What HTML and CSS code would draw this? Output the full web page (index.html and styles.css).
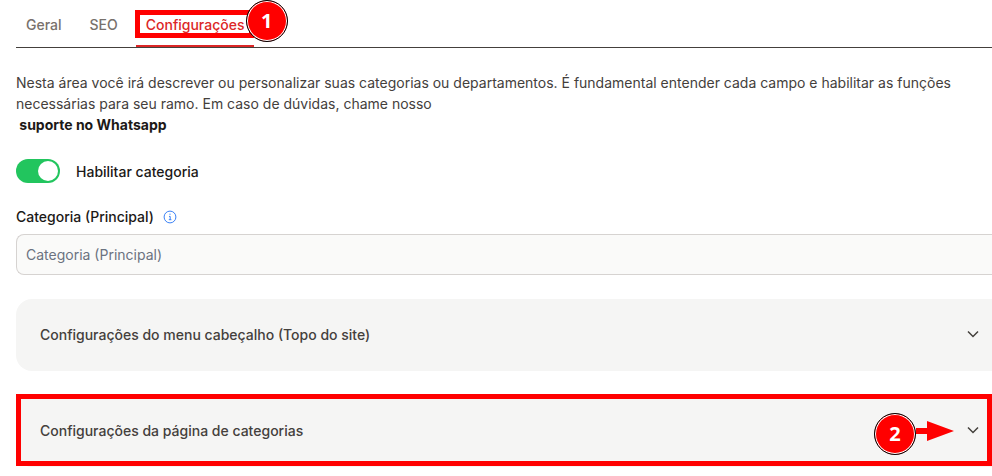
FILE: index.html
```
<!DOCTYPE html>
<html lang="pt-BR">
<head>
    <meta charset="UTF-8">
    <meta name="viewport" content="width=device-width, initial-scale=1.0">
    <title>Configurações da categoria</title>
    <link rel="stylesheet" href="styles.css">
</head>
<body>

<main class="page">
    <nav class="tabs">
        <button type="button" class="tab">Geral</button>
        <button type="button" class="tab">SEO</button>
        <button type="button" class="tab active">
            Configurações
            <span class="marker marker-tab"></span>
            <span class="step step-one">1</span>
        </button>
    </nav>

    <p class="intro">
        Nesta área você irá descrever ou personalizar suas categorias ou departamentos. É fundamental entender cada campo e habilitar as funções necessárias para seu ramo. Em caso de dúvidas, chame nosso
        <a href="#" class="support">&nbsp;suporte no Whatsapp</a>
    </p>

    <label class="switch-row">
        <input type="checkbox" class="switch" checked>
        Habilitar categoria
    </label>

    <div class="field">
        <div class="field-label">
            <label for="categoria">Categoria (Principal)</label>
            <svg class="info" viewBox="0 0 14 14" fill="none" stroke="currentColor">
                <circle cx="7" cy="7" r="5.9"/>
                <path d="M6 6.4h1.2v3.2M5.8 9.7h2.6"/>
                <path d="M6.4 4.2h1.2"/>
            </svg>
        </div>
        <input type="text" id="categoria" class="text-input" placeholder="Categoria (Principal)">
    </div>

    <button type="button" class="panel">
        Configurações do menu cabeçalho (Topo do site)
        <svg class="chevron" viewBox="0 0 14 14" fill="none" stroke="currentColor" stroke-width="1.5"><path d="M2 4.5l5 5 5-5"/></svg>
    </button>

    <button type="button" class="panel">
        Configurações da página de categorias
        <svg class="chevron" viewBox="0 0 14 14" fill="none" stroke="currentColor" stroke-width="1.5"><path d="M2 4.5l5 5 5-5"/></svg>
        <span class="marker marker-panel"></span>
        <span class="step step-two">2</span>
        <svg class="arrow" viewBox="0 0 38 20" fill="currentColor"><path d="M0 7h11V0l27 10-27 10v-7H0z"/></svg>
    </button>
</main>

</body>
</html>
```
FILE: styles.css
```
* {
    box-sizing: border-box;
    margin: 0;
    padding: 0;
}

body {
    font-family: Inter, sans-serif;
    font-size: 14px;
    line-height: 21px;
    color: #1c1917;
    background-color: #ffffff;
}

button, input {
    font: inherit;
    border: none;
}

button {
    cursor: pointer;
}

.page {
    padding: 0 0 8px 16px;
    overflow: hidden;
}

/* Abas */
.tabs {
    display: flex;
    gap: 8px;
    height: 48px;
    border-bottom: 1px solid #44403c;
}

.tab {
    position: relative;
    padding: 4px 10px 0;
    background: none;
    color: #78716c;
    font-weight: 500;
    border-bottom: 2px solid transparent;
}

.tab.active {
    color: #dc2626;
    border-bottom-color: #dc2626;
}

/* Texto de ajuda */
.intro {
    max-width: 960px;
    margin-top: 24px;
    color: #44403c;
}

.support {
    display: block;
    color: #1c1917;
    font-weight: 700;
    text-decoration: none;
}

/* Chave liga/desliga */
.switch-row {
    display: flex;
    align-items: center;
    gap: 16px;
    margin-top: 24px;
    font-weight: 500;
}

.switch {
    appearance: none;
    width: 44px;
    height: 24px;
    padding: 2px;
    border-radius: 12px;
    background-color: #d6d3d1;
    cursor: pointer;
}

.switch::before {
    content: "";
    display: block;
    width: 20px;
    height: 20px;
    border-radius: 50%;
    background-color: #ffffff;
}

.switch:checked {
    background-color: #22c55e;
}

.switch:checked::before {
    margin-left: auto;
}

/* Campo de categoria */
.field {
    margin-top: 23px;
}

.field-label {
    display: flex;
    align-items: center;
    gap: 9px;
    font-weight: 500;
}

.info {
    width: 14px;
    height: 14px;
    color: #3b82f6;
}

.text-input {
    display: block;
    width: 100%;
    height: 41px;
    margin-top: 7px;
    padding: 0 9px 1px;
    border: 1px solid #d6d3d1;
    border-right: none;
    border-radius: 8px 0 0 8px;
    background-color: #fafaf9;
}

.text-input::placeholder {
    color: #6b7280;
}

/* Painéis */
.panel {
    position: relative;
    display: flex;
    align-items: center;
    justify-content: space-between;
    width: 100%;
    height: 72px;
    margin-top: 24px;
    padding: 0 12px 2px 24px;
    border-radius: 16px 0 0 16px;
    background-color: #f5f5f4;
    color: #44403c;
    font-weight: 500;
    text-align: left;
}

.chevron {
    width: 14px;
    height: 14px;
}

/* Marcações do tutorial */
.marker {
    position: absolute;
    border: 5px solid #ff0000;
}

.marker-tab {
    top: 10px;
    left: -1px;
    right: 0;
    height: 28px;
}

.marker-panel {
    top: -1px;
    left: 0;
    right: 0;
    bottom: 1px;
}

.step {
    position: absolute;
    width: 42px;
    height: 42px;
    border: 1px solid #000000;
    border-radius: 50%;
    background-color: #ff0000;
    box-shadow: inset 0 0 0 1px #ffffff;
    color: #ffffff;
    font-family: "Open Sans", sans-serif;
    font-size: 20px;
    font-weight: 700;
    line-height: 40px;
    text-align: center;
}

.step-one {
    top: 0;
    left: 110px;
}

.step-two {
    top: 18px;
    right: 76px;
}

.arrow {
    position: absolute;
    top: 26px;
    right: 38px;
    width: 38px;
    height: 20px;
    color: #ff0000;
}
```
